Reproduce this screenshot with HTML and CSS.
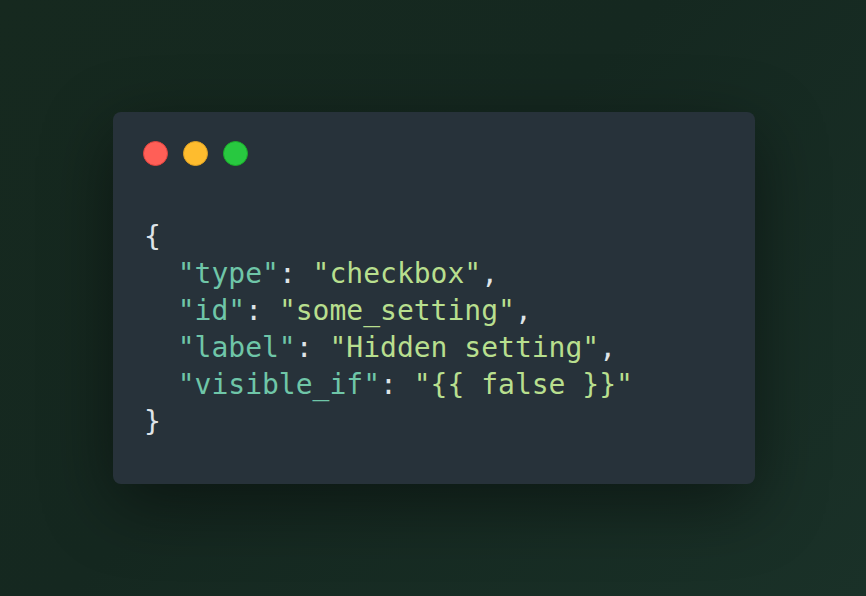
FILE: index.html
```html
<!DOCTYPE html>
<html>
<head>
<meta charset="utf-8">
<link rel="stylesheet" href="styles.css">
</head>
<body>
<div class="stage">
  <div class="window">
    <div class="dots">
      <span class="dot red"></span>
      <span class="dot yellow"></span>
      <span class="dot green"></span>
    </div>
<pre class="code"><span class="p">{</span>
  <span class="k">"type"</span><span class="p">: </span><span class="s">"checkbox"</span><span class="p">,</span>
  <span class="k">"id"</span><span class="p">: </span><span class="s">"some_setting"</span><span class="p">,</span>
  <span class="k">"label"</span><span class="p">: </span><span class="s">"Hidden setting"</span><span class="p">,</span>
  <span class="k">"visible_if"</span><span class="p">: </span><span class="s">"{{ false }}"</span>
<span class="p">}</span></pre>
  </div>
</div>
</body>
</html>
```
FILE: styles.css
```css
html, body {
  margin: 0;
  padding: 0;
  height: 100%;
}
body {
  background: linear-gradient(135deg, #16291f 0%, #152820 45%, #1a3128 100%);
}
.stage {
  width: 866px;
  height: 596px;
  box-sizing: border-box;
  padding-left: 2px;
  display: flex;
  align-items: center;
  justify-content: center;
}
.window {
  width: 642px;
  height: 372px;
  box-sizing: border-box;
  background: #27323a;
  border-radius: 8px;
  padding: 29px 30px 0 30px;
  box-shadow: 0 20px 70px rgba(0, 0, 0, 0.45);
}
.dots {
  display: flex;
  gap: 15px;
}
.dot {
  width: 25px;
  height: 25px;
  border-radius: 50%;
  box-sizing: border-box;
}
.red { background: #ff5f57; border: 1px solid #e0443e; }
.yellow { background: #febc2e; border: 1px solid #dea123; }
.green { background: #28c840; border: 1px solid #1aab29; }
.code {
  margin: 52px 0 0 1px;
  font-family: "DejaVu Sans Mono", monospace;
  font-size: 28px;
  line-height: 37px;
  color: #dfe4e8;
}
.k { color: #6fc6a8; }
.s { color: #b8df8e; }
.p { color: #dfe4e8; }
```
